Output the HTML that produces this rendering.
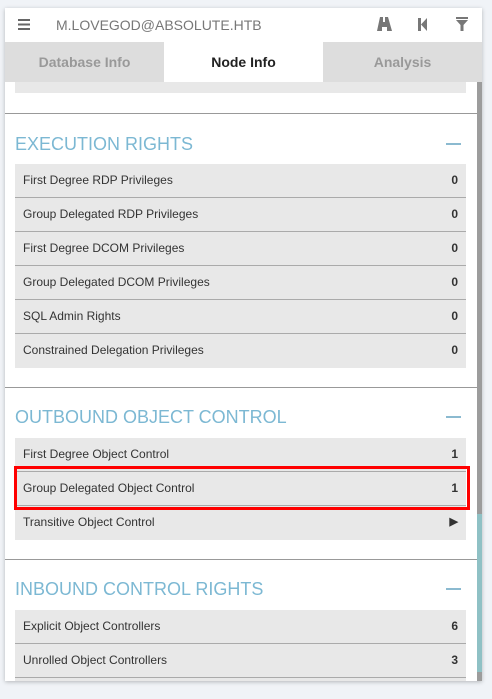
<!DOCTYPE html>
<html><head><style>
*{margin:0;padding:0;box-sizing:border-box}
body{width:492px;height:699px;background:#f0f3f7;font-family:"Liberation Sans",sans-serif;position:relative;overflow:hidden}
.panel{position:absolute;left:5px;top:8px;width:477px;height:673px;background:#fff;box-shadow:0 1px 4px rgba(0,0,0,.25);overflow:hidden}
.top{position:absolute;left:0;top:0;width:477px;height:34px}
.top .u{position:absolute;left:51px;top:9px;font-size:14px;color:#777}
.tabs{position:absolute;left:0;top:34px;width:477px;height:40px;display:flex}
.tabs div{flex:1;text-align:center;line-height:40px;font-weight:bold;font-size:14px;color:#999;background:#ddd}
.tabs .a{background:#fff;color:#222}
.sb{position:absolute;left:472px;top:74px;width:6px;height:599px;background:#9c9c9c}
.sb2{position:absolute;left:472px;top:506px;width:6px;height:158px;background:#8fc1c5}
.row{position:absolute;left:10px;width:451px;height:34px;background:#e8e8e8;border-bottom:1px solid #aaa;font-size:12px;color:#333;line-height:33px;padding-left:8px}
.row b{position:absolute;right:8px;top:0;font-size:12px}
.sep{position:absolute;left:0;width:472px;height:1px;background:#999}
.h{position:absolute;left:10px;font-size:18px;color:#7cb8d3}
.m{position:absolute;left:441px;width:15px;height:2px;background:#8bbad0}
</style></head><body>
<div class="panel">
<div class="top">
<svg style="position:absolute;left:13px;top:11px" width="12" height="11"><rect y="0" width="12" height="2" fill="#666"/><rect y="4.5" width="12" height="2" fill="#666"/><rect y="9" width="12" height="2" fill="#666"/></svg>
<div class="u">M.LOVEGOD@ABSOLUTE.HTB</div>
<svg style="position:absolute;left:371px;top:9px" width="16" height="14"><path d="M4 0h3v5h2V0h3l4 14h-5v-4H6v4H1z" fill="#777"/></svg>
<svg style="position:absolute;left:413px;top:10px" width="10" height="13"><rect x="0" y="0" width="3" height="13" fill="#777"/><path d="M9 0v13L3 6.5z" fill="#777"/></svg>
<svg style="position:absolute;left:451px;top:9px" width="12" height="14"><rect width="12" height="2" fill="#777"/><path d="M0 3h12L7.5 8v6h-3V8z" fill="#777"/></svg>
</div>
<div class="tabs"><div>Database Info</div><div class="a">Node Info</div><div>Analysis</div></div>
<div class="row" style="top:74px;height:11px;border:none"></div>
<div class="sep" style="top:105px"></div>
<div class="h" style="top:126px">EXECUTION RIGHTS</div><div class="m" style="top:135px"></div>
<div class="row" style="top:156px">First Degree RDP Privileges<b>0</b></div>
<div class="row" style="top:190px">Group Delegated RDP Privileges<b>0</b></div>
<div class="row" style="top:224px">First Degree DCOM Privileges<b>0</b></div>
<div class="row" style="top:258px">Group Delegated DCOM Privileges<b>0</b></div>
<div class="row" style="top:292px">SQL Admin Rights<b>0</b></div>
<div class="row" style="top:326px;border:none">Constrained Delegation Privileges<b>0</b></div>
<div class="sep" style="top:379px"></div>
<div class="h" style="top:399px">OUTBOUND OBJECT CONTROL</div><div class="m" style="top:408px"></div>
<div class="row" style="top:430px">First Degree Object Control<b>1</b></div>
<div class="row" style="top:464px">Group Delegated Object Control<b>1</b></div>
<div class="row" style="top:498px;border:none">Transitive Object Control<b style="font-size:11px">&#9654;</b></div>
<div style="position:absolute;left:9px;top:458px;width:456px;height:44px;border:3px solid #f00"></div>
<div class="sep" style="top:551px"></div>
<div class="h" style="top:571px">INBOUND CONTROL RIGHTS</div><div class="m" style="top:580px"></div>
<div class="row" style="top:602px">Explicit Object Controllers<b>6</b></div>
<div class="row" style="top:636px">Unrolled Object Controllers<b>3</b></div>
<div class="row" style="top:670px"></div>
<div class="sb"></div><div class="sb2"></div>
</div>
</body></html>
